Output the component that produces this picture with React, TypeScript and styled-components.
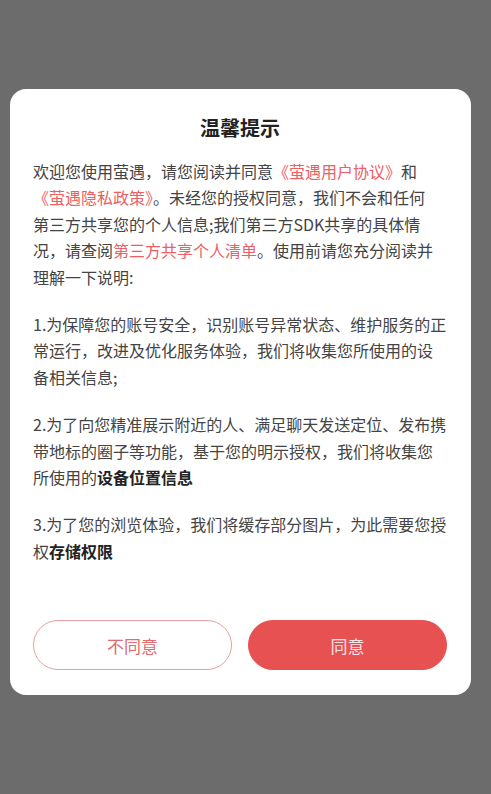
import React from "react";
import styled, { createGlobalStyle } from "styled-components";

const Global = createGlobalStyle`
  html, body { margin: 0; padding: 0; background: #6c6c6c; }
  body { font-family: "Noto Sans CJK SC", "Noto Sans", sans-serif; }
`;

const Screen = styled.div`
  width: 491px;
  height: 794px;
  background: #6c6c6c;
  padding: 89px 20px 0 10px;
  box-sizing: border-box;
`;

const Card = styled.div`
  width: 461px;
  background: #fff;
  border-radius: 16px;
  box-sizing: border-box;
  padding: 24px 24px 25px 23px;
  display: flex;
  flex-direction: column;
`;

const Title = styled.h2`
  margin: 0 0 15px;
  text-align: center;
  font-size: 20px;
  line-height: 30px;
  font-weight: 700;
  color: #222;
`;

const Para = styled.p`
  margin: 0 0 21px;
  font-size: 16px;
  line-height: 26.4px;
  color: #444;
  &:last-of-type { margin-bottom: 0; }
`;

const Link = styled.span`
  color: #ec6063;
`;

const Strong = styled.b`
  font-weight: 700;
  color: #222;
`;

const Actions = styled.div`
  margin-top: 56px;
  display: flex;
  gap: 16px;
`;

const Button = styled.button<{ $primary?: boolean }>`
  flex: 1;
  height: 50px;
  border-radius: 25px;
  font-family: inherit;
  font-size: 17px;
  border: 1.5px solid ${(p) => (p.$primary ? "#e85152" : "#e8a0a0")};
  background: ${(p) => (p.$primary ? "#e85152" : "#fff")};
  color: ${(p) => (p.$primary ? "#fbe4e4" : "#e06a6c")};
`;

export default function App() {
  return (
    <>
      <Global />
      <Screen>
        <Card>
          <Title>温馨提示</Title>
          <Para>
            欢迎您使用萤遇，请您阅读并同意<Link>《萤遇用户协议》</Link>和
            <br />
            <Link>《萤遇隐私政策》</Link>。未经您的授权同意，我们不会和任何
            <br />
            第三方共享您的个人信息;我们第三方SDK共享的具体情
            <br />
            况，请查阅<Link>第三方共享个人清单</Link>。使用前请您充分阅读并
            <br />
            理解一下说明:
          </Para>
          <Para>
            1.为保障您的账号安全，识别账号异常状态、维护服务的正常运行，改进及优化服务体验，我们将收集您所使用的设备相关信息;
          </Para>
          <Para>
            2.为了向您精准展示附近的人、满足聊天发送定位、发布携带地标的圈子等功能，基于您的明示授权，我们将收集您所使用的
            <Strong>设备位置信息</Strong>
          </Para>
          <Para>
            3.为了您的浏览体验，我们将缓存部分图片，为此需要您授权<Strong>存储权限</Strong>
          </Para>
          <Actions>
            <Button>不同意</Button>
            <Button $primary>同意</Button>
          </Actions>
        </Card>
      </Screen>
    </>
  );
}
